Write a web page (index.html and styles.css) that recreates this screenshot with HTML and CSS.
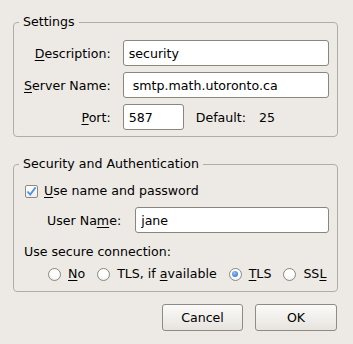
FILE: index.html
```html
<!DOCTYPE html>
<html lang="en">
<head>
    <meta charset="UTF-8">
    <meta name="viewport" content="width=device-width, initial-scale=1.0">
    <title>SMTP Server</title>
    <link rel="stylesheet" href="styles.css">
</head>
<body>
    <div class="dialog">
        <fieldset class="frame">
            <legend>Settings</legend>
            <div class="form-grid">
                <label class="field-label" for="description"><u>D</u>escription:</label>
                <input type="text" class="entry" id="description" value="security">

                <label class="field-label" for="server"><u>S</u>erver Name:</label>
                <input type="text" class="entry" id="server" value=" smtp.math.utoronto.ca">

                <label class="field-label" for="port"><u>P</u>ort:</label>
                <div class="port-row">
                    <input type="text" class="entry port" id="port" value="587">
                    <span class="default-label">Default:</span>
                    <span class="default-value">25</span>
                </div>
            </div>
        </fieldset>

        <fieldset class="frame security">
            <legend>Security and Authentication</legend>
            <div class="security-body">
                <label class="check-row">
                    <span class="checkbox">
                        <svg width="11" height="11" viewBox="0 0 11 11">
                            <path d="M1.5 5.5 L4.2 8.6 L9.6 1.4" fill="none" stroke="#4f93dc" stroke-width="1.8"/>
                        </svg>
                    </span>
                    <span><u>U</u>se name and password</span>
                </label>

                <div class="user-row">
                    <label class="field-label" for="username">User Na<u>m</u>e:</label>
                    <input type="text" class="entry" id="username" value="jane">
                </div>

                <div class="secure-title">Use secure connection:</div>

                <div class="radio-row">
                    <label class="radio-item"><span class="radio"></span><span><u>N</u>o</span></label>
                    <label class="radio-item"><span class="radio"></span><span>TLS, if <u>a</u>vailable</span></label>
                    <label class="radio-item"><span class="radio checked"></span><span><u>T</u>LS</span></label>
                    <label class="radio-item"><span class="radio"></span><span>SS<u>L</u></span></label>
                </div>
            </div>
        </fieldset>

        <div class="buttons">
            <button type="button" class="btn cancel">Cancel</button>
            <button type="button" class="btn ok">OK</button>
        </div>
    </div>
</body>
</html>
```

FILE: styles.css
```css
* {
    box-sizing: border-box;
}

body {
    margin: 0;
    background: #edeae5;
    font-family: "DejaVu Sans", "Noto Sans", sans-serif;
    font-size: 12.6px;
    color: #000;
    white-space: nowrap;
}

u {
    text-decoration-thickness: 1px;
    text-underline-offset: 2px;
}

.dialog {
    display: flex;
    flex-direction: column;
    padding: 14px 15px 0 13px;
}

.frame {
    margin: 0;
    padding: 0;
    min-width: 0;
    border: 1px solid #b2ada3;
    border-radius: 4px;
}

.frame legend {
    margin-left: 5px;
    padding: 0 4px;
    line-height: 16px;
}

.security {
    margin-top: 19px;
}

.form-grid {
    display: grid;
    grid-template-columns: auto 1fr;
    column-gap: 12px;
    row-gap: 6px;
    align-items: center;
    padding: 10px 8px 6px 10px;
}

.field-label {
    justify-self: end;
}

.entry {
    height: 26px;
    width: 100%;
    margin: 0;
    padding: 0 5px;
    border: 1px solid #8a867e;
    border-radius: 3px;
    background: #fff;
    font: inherit;
    color: #000;
    outline: none;
}

.port-row {
    display: flex;
    align-items: center;
}

.entry.port {
    width: 61px;
}

.default-label {
    margin-left: 12px;
}

.default-value {
    margin-left: 13px;
}

.security-body {
    display: flex;
    flex-direction: column;
    padding: 11px 8px 9px 10px;
}

.check-row {
    display: flex;
    align-items: center;
    gap: 6px;
    line-height: 16px;
    margin-left: 1px;
}

.checkbox {
    flex-shrink: 0;
    width: 13px;
    height: 13px;
    border: 1px solid #8e8a83;
    border-radius: 2px;
    background: linear-gradient(#ffffff, #f1efeb);
    display: flex;
    align-items: center;
    justify-content: center;
}

.user-row {
    display: flex;
    align-items: center;
    gap: 14px;
    margin: 8px 0 0 23px;
}

.user-row .entry {
    flex: 1;
}

.secure-title {
    margin-top: 11px;
    line-height: 16px;
}

.radio-row {
    display: flex;
    align-items: center;
    gap: 12px;
    margin: 6px 0 0 24px;
    line-height: 16px;
}

.radio-item {
    flex-shrink: 0;
    display: flex;
    align-items: center;
    gap: 7px;
}

.radio {
    flex-shrink: 0;
    width: 13px;
    height: 13px;
    border: 1px solid #8c8880;
    border-radius: 50%;
    background: radial-gradient(circle at 50% 35%, #ffffff 40%, #ebe8e3 100%);
    display: flex;
    align-items: center;
    justify-content: center;
}

.radio.checked::after {
    content: '';
    width: 6px;
    height: 6px;
    border-radius: 50%;
    background: radial-gradient(circle at 40% 35%, #9cc4f0 0%, #3f82d4 70%);
}

.buttons {
    display: flex;
    justify-content: flex-end;
    gap: 12px;
    margin: 12px 1px 0 0;
}

.btn {
    height: 27px;
    margin: 0;
    padding: 0;
    border: 1px solid #8f8b84;
    border-radius: 3px;
    background: linear-gradient(#fbfaf8, #e7e4df);
    font: inherit;
    color: #000;
}

.cancel {
    width: 81px;
}

.ok {
    width: 82px;
}
```
